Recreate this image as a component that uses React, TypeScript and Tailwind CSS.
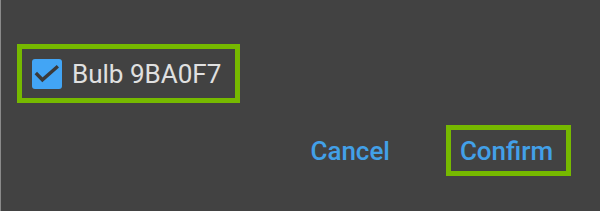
const App = () => {
  return (
    <div
      className="w-[600px] h-[211px] bg-[#424242] border-l border-[#8a8a8a] flex flex-col"
      style={{ fontFamily: "Roboto, 'Noto Sans', sans-serif" }}
    >
      <div className="pt-[44px] pl-[16px]">
        <label className="inline-flex items-center h-[59px] w-[223px] border-[5px] border-[#76b900] pl-[10px] gap-[10px]">
          <span className="w-[30px] h-[30px] rounded-[3px] bg-[#42a5f5] flex items-center justify-center">
            <svg width="30" height="30" viewBox="0 0 30 30" fill="none">
              <path
                d="M5 15.2 L10.4 20.8 L24.6 8.4"
                stroke="#3a3a3a"
                strokeWidth="3.4"
                strokeLinecap="square"
              />
            </svg>
          </span>
          <span className="text-[26px] leading-none text-[#e0e0e0]">Bulb 9BA0F7</span>
        </label>
      </div>

      <div className="flex justify-end items-center mt-[22px] pr-[29px]">
        <button className="text-[26px] font-medium leading-none text-[#42a0e8] mr-[56px]">
          Cancel
        </button>
        <button className="h-[51px] w-[125px] border-[5px] border-[#76b900] flex items-center justify-center pr-[4px] text-[26px] font-medium leading-none text-[#42a0e8]">
          Confirm
        </button>
      </div>
    </div>
  );
};

export default App;
